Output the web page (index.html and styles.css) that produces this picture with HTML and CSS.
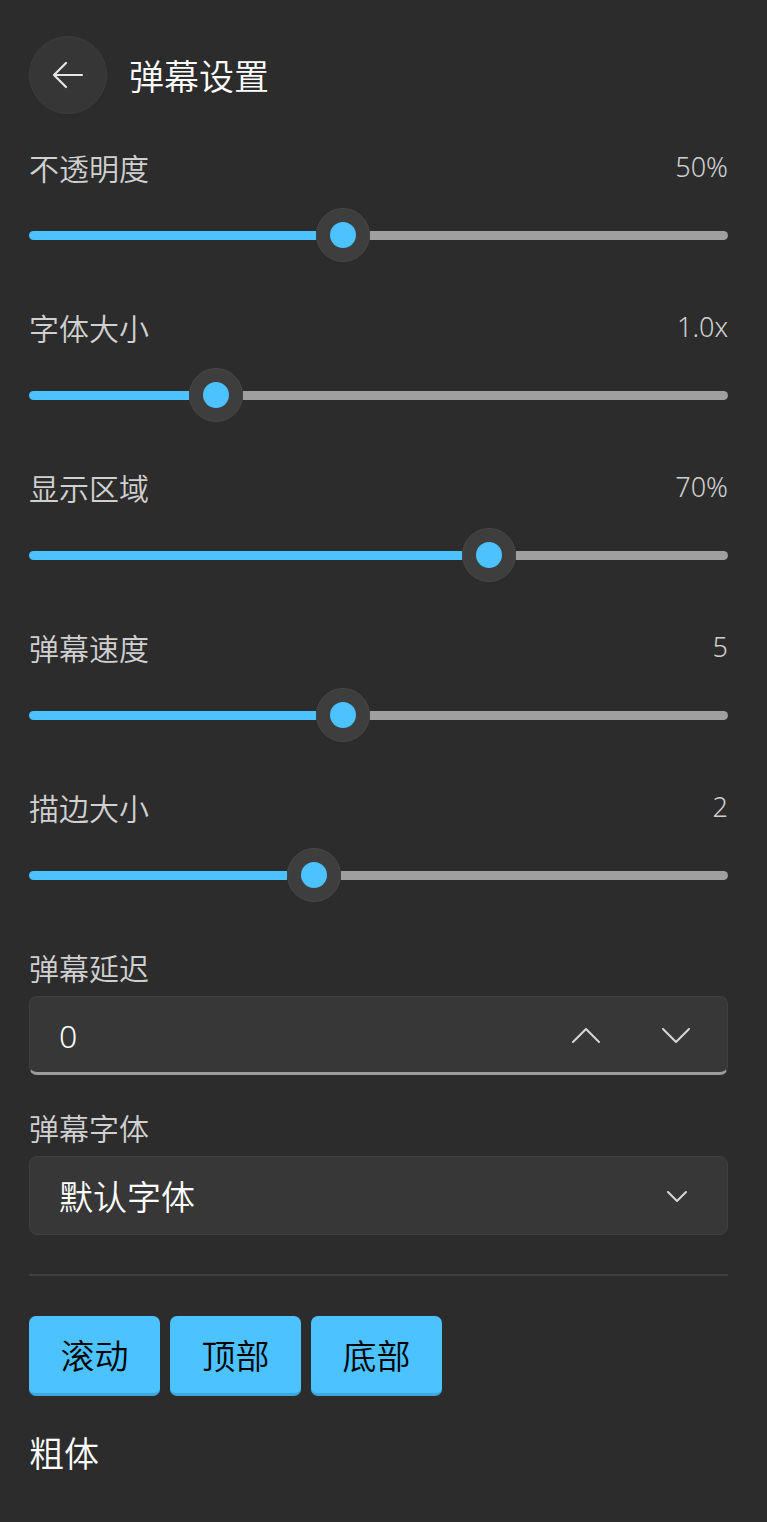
FILE: index.html
```html
<!DOCTYPE html>
<html lang="zh-CN">
<head>
<meta charset="utf-8">
<title>弹幕设置</title>
<link rel="stylesheet" href="styles.css">
</head>
<body>
<div class="page">
  <header class="header">
    <button class="back" aria-label="返回">
      <svg width="32" height="28" viewBox="0 0 32 28" fill="none" stroke="#e6e6e6" stroke-width="2.2" stroke-linecap="round" stroke-linejoin="round">
        <path d="M30 14H2M14 2L2 14l12 12"/>
      </svg>
    </button>
    <h1 class="title">弹幕设置</h1>
  </header>

  <section class="setting">
    <div class="label-row"><span class="label">不透明度</span><span class="value">50%</span></div>
    <div class="slider"><div class="fill" style="width:287px"></div><div class="thumb"><div class="dot"></div></div><div class="rest"></div></div>
  </section>

  <section class="setting">
    <div class="label-row"><span class="label">字体大小</span><span class="value">1.0x</span></div>
    <div class="slider"><div class="fill" style="width:160px"></div><div class="thumb"><div class="dot"></div></div><div class="rest"></div></div>
  </section>

  <section class="setting">
    <div class="label-row"><span class="label">显示区域</span><span class="value">70%</span></div>
    <div class="slider"><div class="fill" style="width:433px"></div><div class="thumb"><div class="dot"></div></div><div class="rest"></div></div>
  </section>

  <section class="setting">
    <div class="label-row"><span class="label">弹幕速度</span><span class="value">5</span></div>
    <div class="slider"><div class="fill" style="width:287px"></div><div class="thumb"><div class="dot"></div></div><div class="rest"></div></div>
  </section>

  <section class="setting">
    <div class="label-row"><span class="label">描边大小</span><span class="value">2</span></div>
    <div class="slider"><div class="fill" style="width:258px"></div><div class="thumb"><div class="dot"></div></div><div class="rest"></div></div>
  </section>

  <section class="field">
    <div class="label">弹幕延迟</div>
    <div class="box number-box">
      <span class="box-text number">0</span>
      <span class="spin">
        <svg width="30" height="17" viewBox="0 0 30 17" fill="none" stroke="#d6d6d6" stroke-width="2" stroke-linecap="round" stroke-linejoin="round"><path d="M2 15L15 2l13 13"/></svg>
      </span>
      <span class="spin">
        <svg width="30" height="17" viewBox="0 0 30 17" fill="none" stroke="#d6d6d6" stroke-width="2" stroke-linecap="round" stroke-linejoin="round"><path d="M2 2l13 13L28 2"/></svg>
      </span>
    </div>
  </section>

  <section class="field">
    <div class="label">弹幕字体</div>
    <div class="box select-box">
      <span class="box-text">默认字体</span>
      <svg class="caret" width="22" height="12" viewBox="0 0 22 12" fill="none" stroke="#d6d6d6" stroke-width="2" stroke-linecap="round" stroke-linejoin="round"><path d="M2 2l9 9 9-9"/></svg>
    </div>
  </section>

  <hr class="divider">

  <div class="modes">
    <button class="mode">滚动</button>
    <button class="mode">顶部</button>
    <button class="mode">底部</button>
  </div>

  <div class="bold-label">粗体</div>
</div>
</body>
</html>
```

FILE: styles.css
```css
* { box-sizing: border-box; }

html, body {
  margin: 0;
  padding: 0;
  background: #2c2c2c;
}

body {
  font-family: "Noto Sans", "Noto Sans CJK SC", sans-serif;
  color: #cfcfcf;
  min-height: 1522px;
}

.page {
  padding: 36px 39px 40px 29px;
  display: flex;
  flex-direction: column;
}

.header {
  display: flex;
  align-items: center;
  gap: 22px;
  height: 78px;
}

.back {
  width: 78px;
  height: 78px;
  border-radius: 50%;
  background: #363636;
  border: 1px solid #3d3d3d;
  display: flex;
  align-items: center;
  justify-content: center;
  padding: 0;
  margin: 0;
}

.title {
  margin: 0;
  font-size: 35px;
  font-weight: 350;
  color: #ffffff;
  line-height: 48px;
  font-family: "Noto Sans CJK SC", sans-serif;
}

.setting {
  display: flex;
  flex-direction: column;
}

.header + .setting { margin-top: 33px; }

.label-row {
  display: flex;
  justify-content: space-between;
  align-items: center;
  height: 40px;
}

.label {
  font-size: 30px;
  font-weight: 350;
  line-height: 40px;
  height: 40px;
  color: #d0d0d0;
  font-family: "Noto Sans CJK SC", sans-serif;
}

.value {
  font-size: 27px;
  font-weight: 350;
  line-height: 40px;
  color: #d0d0d0;
}

.slider {
  display: flex;
  align-items: center;
  height: 54px;
  margin-top: 21px;
  margin-bottom: 45px;
}

.fill {
  height: 9px;
  background: #4cc2ff;
  border-radius: 5px 0 0 5px;
  flex: none;
}

.rest {
  flex: 1;
  height: 9px;
  background: #9f9f9f;
  border-radius: 0 5px 5px 0;
}

.thumb {
  flex: none;
  width: 54px;
  height: 54px;
  border-radius: 50%;
  background: #3e3e3e;
  border: 1px solid #474747;
  display: flex;
  align-items: center;
  justify-content: center;
}

.dot {
  width: 26px;
  height: 26px;
  border-radius: 50%;
  background: #4cc2ff;
}

.field {
  display: flex;
  flex-direction: column;
  gap: 9px;
}

.field + .field { margin-top: 32px; }

.box {
  height: 79px;
  border-radius: 8px;
  background: #373737;
  border: 1px solid #3f3f3f;
  display: flex;
  align-items: center;
  padding: 0 36px 0 29px;
}

.number-box {
  border-bottom: 3px solid #9c9c9c;
  padding-right: 36px;
}

.box-text {
  flex: 1;
  font-size: 34px;
  font-weight: 350;
  color: #ffffff;
  font-family: "Noto Sans CJK SC", sans-serif;
}

.box-text.number {
  font-family: "Noto Sans", sans-serif;
  font-size: 32px;
  font-weight: 350;
  padding-top: 2px;
}

.spin {
  width: 90px;
  display: flex;
  justify-content: center;
  padding-top: 2px;
}

.spin:last-child {
  justify-content: flex-end;
  width: 60px;
}

.select-box { padding-right: 39px; }

.caret { flex: none; }

.divider {
  margin: 39px 0 0 0;
  border: 0;
  height: 2px;
  background: #3f3f3f;
}

.modes {
  display: flex;
  gap: 10px;
  margin-top: 40px;
}

.mode {
  width: 131px;
  height: 80px;
  border: 0;
  border-bottom: 3px solid #3ea8de;
  border-radius: 7px;
  background: #4cc2ff;
  color: #000000;
  font-size: 34px;
  font-weight: 350;
  font-family: "Noto Sans CJK SC", sans-serif;
  padding: 0;
  margin: 0;
}

.bold-label {
  margin-top: 32px;
  font-size: 35px;
  font-weight: 350;
  line-height: 48px;
  color: #ffffff;
  font-family: "Noto Sans CJK SC", sans-serif;
}
```
